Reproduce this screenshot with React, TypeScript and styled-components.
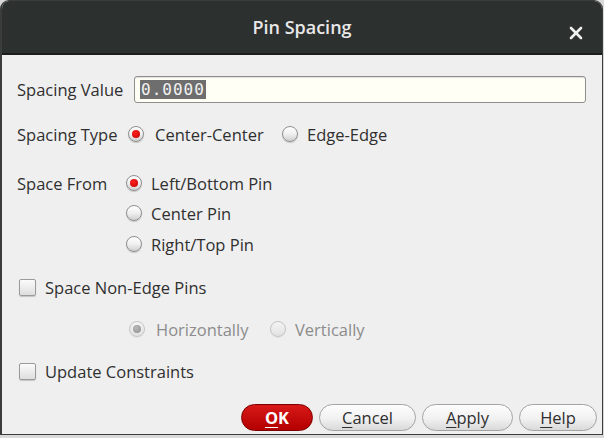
import React from "react";
import styled, { createGlobalStyle, css } from "styled-components";

const Global = createGlobalStyle`
  html, body { margin: 0; padding: 0; background: #d9d9d9; }
  body { width: 604px; height: 438px; overflow: hidden; font-family: "Open Sans", "Noto Sans", sans-serif; }
`;

const Window = styled.div`
  width: 600px;
  height: 433px;
  border: 1px solid #3a3d3c;
  border-left-width: 2px;
  border-radius: 9px 9px 0 0;
  overflow: hidden;
  background: #efefef;
  display: flex;
  flex-direction: column;
`;

const TitleBar = styled.div`
  height: 52px;
  flex: none;
  background: #2c302f;
  border-bottom: 2px solid #1b1d1c;
  display: flex;
  align-items: center;
  justify-content: center;
  position: relative;
  color: #e9e9e9;
  font-size: 18px;
  font-weight: 600;
`;

const CloseBtn = styled.div`
  position: absolute;
  right: 19px;
  top: 20px;
  width: 14px;
  height: 14px;
`;

const Body = styled.div`
  flex: 1;
  display: flex;
  flex-direction: column;
  padding: 21px 5px 0 15px;
  color: #2f2f2f;
  font-size: 16.5px;
`;

const Row = styled.div<{ $mt?: number; $h?: number; $indent?: number; $pr?: number }>`
  display: flex;
  align-items: center;
  height: ${(p) => p.$h ?? 22}px;
  margin-top: ${(p) => p.$mt ?? 0}px;
  padding-left: ${(p) => p.$indent ?? 0}px;
  padding-right: ${(p) => p.$pr ?? 0}px;
`;

const Label = styled.div<{ $w: number }>`
  width: ${(p) => p.$w}px;
  flex: none;
  white-space: nowrap;
`;

const Input = styled.div`
  flex: 1;
  height: 25px;
  border: 1px solid #8e8e8e;
  border-radius: 3px;
  background: #fffff6;
  box-shadow: inset 0 1px 1px rgba(0, 0, 0, 0.12);
  display: flex;
  align-items: center;
  padding-left: 5px;
`;

const Selected = styled.span`
  background: #6e6e6e;
  color: #f2f2f2;
  font-family: "DejaVu Sans Mono", monospace;
  font-size: 16px;
  letter-spacing: 1px;
  line-height: 19px;
  padding: 0 1px 0 1px;
`;

const Option = styled.div<{ $w?: number; $disabled?: boolean }>`
  display: flex;
  align-items: center;
  width: ${(p) => (p.$w ? `${p.$w}px` : "auto")};
  flex: none;
  white-space: nowrap;
  color: ${(p) => (p.$disabled ? "#8c8c8c" : "#2f2f2f")};
`;

const RadioDot = styled.span<{ $checked?: boolean; $disabled?: boolean; $gap: number }>`
  width: 16px;
  height: 16px;
  border-radius: 50%;
  flex: none;
  margin-right: ${(p) => p.$gap}px;
  box-sizing: border-box;
  border: 1px solid ${(p) => (p.$disabled ? "#c4c4c4" : "#8f8f8f")};
  background: ${(p) =>
    p.$disabled
      ? "linear-gradient(#f4f4f4, #e2e2e2)"
      : "linear-gradient(#ffffff 0%, #f0f0f0 50%, #cfcfcf 100%)"};
  box-shadow: 0 1px 1px rgba(0, 0, 0, ${(p) => (p.$disabled ? 0.05 : 0.18)});
  display: flex;
  align-items: center;
  justify-content: center;
  ${(p) =>
    p.$checked &&
    css`
      &::after {
        content: "";
        width: 8px;
        height: 8px;
        border-radius: 50%;
        background: ${p.$disabled
          ? "radial-gradient(circle at 40% 35%, #b8b8b8, #909090)"
          : "radial-gradient(circle at 40% 35%, #ff2020, #c00000)"};
      }
    `}
`;

const CheckBox = styled.span`
  width: 17px;
  height: 17px;
  box-sizing: border-box;
  border: 1px solid #9a9a9a;
  border-radius: 2px;
  background: linear-gradient(#fbfbfb, #dedede);
  box-shadow: 0 1px 1px rgba(0, 0, 0, 0.18);
  margin: 0 9px 0 2px;
  flex: none;
`;

const ButtonBar = styled.div`
  display: flex;
  justify-content: flex-end;
  gap: 6px;
  margin-top: 22px;
`;

const Button = styled.div<{ $w: number; $primary?: boolean }>`
  width: ${(p) => p.$w}px;
  height: 27px;
  box-sizing: border-box;
  border-radius: 14px;
  display: flex;
  align-items: center;
  justify-content: center;
  font-size: 16.5px;
  ${(p) =>
    p.$primary
      ? css`
          background: linear-gradient(#d81818, #b30000);
          border: 1px solid #7d0000;
          color: #ffffff;
          font-weight: 700;
        `
      : css`
          background: linear-gradient(#fdfdfd 0%, #f1f1f1 55%, #d9d9d9 100%);
          border: 1px solid #a3a3a3;
          color: #2f2f2f;
        `}
`;

const Mn = styled.span`
  text-decoration: underline;
  text-underline-offset: 3px;
`;

const Radio = ({
  label,
  checked,
  disabled,
  w,
  gap = 10,
}: {
  label: string;
  checked?: boolean;
  disabled?: boolean;
  w?: number;
  gap?: number;
}) => (
  <Option $w={w} $disabled={disabled}>
    <RadioDot $checked={checked} $disabled={disabled} $gap={gap} />
    {label}
  </Option>
);

export default function App() {
  return (
    <>
      <Global />
      <Window>
        <TitleBar>
          Pin Spacing
          <CloseBtn>
            <svg width="14" height="14" viewBox="0 0 14 14">
              <path d="M2 2 L12 12 M12 2 L2 12" stroke="#f0f0f0" strokeWidth="2.6" strokeLinecap="round" />
            </svg>
          </CloseBtn>
        </TitleBar>
        <Body>
          <Row $h={27} $pr={11}>
            <Label $w={117}>Spacing Value</Label>
            <Input>
              <Selected>0.0000</Selected>
            </Input>
          </Row>
          <Row $mt={20}>
            <Label $w={111}>Spacing Type</Label>
            <Radio label="Center-Center" checked w={154} gap={11} />
            <Radio label="Edge-Edge" gap={9} />
          </Row>
          <Row $mt={27}>
            <Label $w={109}>Space From</Label>
            <Radio label="Left/Bottom Pin" checked gap={9} />
          </Row>
          <Row $mt={8} $indent={109}>
            <Radio label="Center Pin" gap={9} />
          </Row>
          <Row $mt={9} $indent={109}>
            <Radio label="Right/Top Pin" gap={9} />
          </Row>
          <Row $mt={21}>
            <CheckBox />
            Space Non-Edge Pins
          </Row>
          <Row $mt={20} $indent={112}>
            <Radio label="Horizontally" checked disabled w={141} gap={11} />
            <Radio label="Vertically" disabled gap={9} />
          </Row>
          <Row $mt={20}>
            <CheckBox />
            Update Constraints
          </Row>
          <ButtonBar>
            <Button $w={72} $primary>
              <Mn>O</Mn>K
            </Button>
            <Button $w={97}>
              <Mn>C</Mn>ancel
            </Button>
            <Button $w={91}>
              <Mn>A</Mn>pply
            </Button>
            <Button $w={78}>
              <Mn>H</Mn>elp
            </Button>
          </ButtonBar>
        </Body>
      </Window>
    </>
  );
}
